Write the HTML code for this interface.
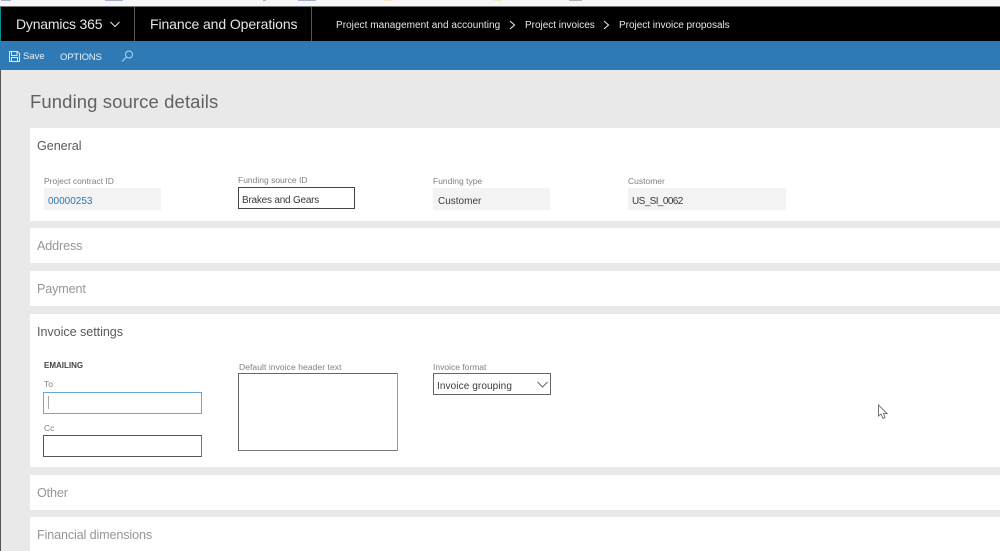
<!DOCTYPE html>
<html><head><meta charset="utf-8">
<style>
html,body{margin:0;padding:0;width:1000px;height:551px;overflow:hidden;background:#e9e9e9;font-family:"Liberation Sans",sans-serif}
.a{position:absolute;white-space:nowrap}
.box{position:absolute;box-sizing:border-box}
.w{position:absolute;left:30px;width:970px;background:#fff}
.h{font-size:12.6px;color:#5a5a5a;line-height:18px;letter-spacing:-.05px}
.hg{font-size:12.6px;color:#969696;line-height:18px;letter-spacing:-.13px}
.l{font-size:8.5px;color:#808080;line-height:11px}
.v{font-size:10px;color:#3a3a3a;line-height:12px}
.ro{background:#f3f3f3}
.in{background:#fff;border:1px solid #555;border-right-color:#777}
.hd{color:#e6e6e6;line-height:16px}
</style></head><body>
<div class="box" style="left:0;top:0;width:1000px;height:6px;background:#f6f6f6"></div>
<div class="box" style="left:1px;top:0;width:10px;height:1px;background:#a5b1ca"></div>
<div class="box" style="left:105px;top:0;width:18px;height:1px;background:#a5b1ca"></div>
<div class="box" style="left:263px;top:0;width:3px;height:1px;background:#a5b1ca"></div>
<div class="box" style="left:298px;top:0;width:18px;height:1px;background:#a5b1ca"></div>
<div class="box" style="left:384px;top:0;width:9px;height:1px;background:#f5e7c6"></div>
<div class="box" style="left:493px;top:0;width:9px;height:1px;background:#f5e7c6"></div>
<div class="box" style="left:569px;top:0;width:13px;height:1px;background:#b5b5b5"></div>
<div class="box" style="left:0;top:6px;width:1000px;height:1px;background:#777"></div>

<div class="box" style="left:0;top:7px;width:1000px;height:34px;background:#000"></div>
<div class="box" style="left:0;top:7px;width:1px;height:34px;background:#0a8f96"></div>
<div class="box" style="left:134px;top:7px;width:1px;height:34px;background:#555"></div>
<div class="box" style="left:311px;top:7px;width:1px;height:34px;background:#555"></div>
<div class="a hd" style="left:16px;top:16px;font-size:14px;letter-spacing:-.2px">Dynamics 365</div>
<svg class="a" style="left:110px;top:21px" width="10" height="7" viewBox="0 0 10 7"><path d="M.5 1L5 5.500 9.500 1" fill="none" stroke="#e6e6e6" stroke-width="1"/></svg>
<div class="a hd" style="left:150px;top:16px;font-size:14px;letter-spacing:-.09px">Finance and Operations</div>
<div class="a hd" style="left:336px;top:18px;font-size:10px;letter-spacing:.04px">Project management and accounting</div>
<svg class="a" style="left:509px;top:20px" width="7" height="10" viewBox="0 0 7 10"><path d="M1 1L5.500 5 1 9" fill="none" stroke="#e6e6e6" stroke-width="1.100"/></svg>
<div class="a hd" style="left:525px;top:18px;font-size:10px;letter-spacing:-.02px">Project invoices</div>
<svg class="a" style="left:603px;top:20px" width="7" height="10" viewBox="0 0 7 10"><path d="M1 1L5.500 5 1 9" fill="none" stroke="#e6e6e6" stroke-width="1.100"/></svg>
<div class="a hd" style="left:619px;top:18px;font-size:10px;letter-spacing:-.02px">Project invoice proposals</div>

<div class="box" style="left:0;top:41px;width:1000px;height:29px;background:#2f7ab5"></div>
<svg class="a" style="left:9px;top:51px" width="11" height="11" viewBox="0 0 11 11"><path d="M.5.500H8.500L10.500 2.500V10.500H.5ZM2.500.500V4.500H8V.500M2.500 10.500V6.500H8.500V10.500" fill="none" stroke="#dbe8f3" stroke-width="1"/></svg>
<div class="a" style="left:23px;top:51px;font-size:9.500px;line-height:12px;color:#e6f0f7">Save</div>
<div class="a" style="left:60px;top:52px;font-size:9.500px;line-height:12px;color:#e6f0f7;letter-spacing:-.15px">OPTIONS</div>
<svg class="a" style="left:121px;top:50px" width="13" height="13" viewBox="0 0 13 13"><circle cx="8" cy="4.500" r="3.500" fill="none" stroke="#b9d3e8" stroke-width="1"/><path d="M5.500 7L1 11.500" stroke="#b9d3e8" stroke-width="1"/></svg>

<div class="box" style="left:0;top:70px;width:1px;height:481px;background:#555"></div>
<div class="a" style="left:30px;top:90px;font-size:18.500px;line-height:24px;color:#626262;letter-spacing:.1px">Funding source details</div>

<div class="w" style="top:128px;height:93px"></div>
<div class="w" style="top:228px;height:35px"></div>
<div class="w" style="top:271px;height:35px"></div>
<div class="w" style="top:314px;height:153px"></div>
<div class="w" style="top:475px;height:35px"></div>
<div class="w" style="top:517px;height:34px"></div>

<div class="a h" style="left:37px;top:137px">General</div>
<div class="a hg" style="left:37px;top:237px">Address</div>
<div class="a hg" style="left:37px;top:280px">Payment</div>
<div class="a h" style="left:37px;top:323px">Invoice settings</div>
<div class="a hg" style="left:37px;top:484px">Other</div>
<div class="a hg" style="left:37px;top:526px">Financial dimensions</div>

<div class="a l" style="left:44px;top:176px">Project contract ID</div>
<div class="box ro" style="left:44px;top:188px;width:117px;height:22px"></div>
<div class="a v" style="left:48px;top:196px;color:#2f77b5">00000253</div>

<div class="a l" style="left:238px;top:175px">Funding source ID</div>
<div class="box in" style="left:238px;top:187px;width:117px;height:22px;border-color:#444"></div>
<div class="a v" style="left:242px;top:195px;letter-spacing:-.22px">Brakes and Gears</div>

<div class="a l" style="left:433px;top:176px">Funding type</div>
<div class="box ro" style="left:433px;top:188px;width:117px;height:22px"></div>
<div class="a v" style="left:438px;top:196px">Customer</div>

<div class="a l" style="left:628px;top:176px">Customer</div>
<div class="box ro" style="left:628px;top:188px;width:158px;height:22px"></div>
<div class="a v" style="left:632px;top:196px;letter-spacing:-.6px">US_SI_0062</div>

<div class="a" style="left:44px;top:360px;font-size:8px;line-height:11px;font-weight:bold;color:#444">EMAILING</div>
<div class="a l" style="left:44px;top:379px">To</div>
<div class="box" style="left:43px;top:392px;width:159px;height:22px;background:#fff;border:1px solid #6ba6d6"></div>
<div class="box" style="left:48px;top:396px;width:1px;height:13px;background:#aaa"></div>
<div class="a l" style="left:44px;top:423px">Cc</div>
<div class="box in" style="left:43px;top:435px;width:159px;height:22px"></div>

<div class="a l" style="left:239px;top:362px;letter-spacing:.07px">Default invoice header text</div>
<div class="box in" style="left:238px;top:373px;width:160px;height:78px;border-color:#666;border-right-color:#999;border-bottom-color:#777"></div>

<div class="a l" style="left:433px;top:362px">Invoice format</div>
<div class="box in" style="left:433px;top:373px;width:118px;height:22px;border-color:#666"></div>
<div class="a v" style="left:437px;top:381px;letter-spacing:.1px">Invoice grouping</div>
<svg class="a" style="left:537px;top:381px" width="11" height="7" viewBox="0 0 11 7"><path d="M.5 1L5.500 6 10.500 1" fill="none" stroke="#666" stroke-width="1"/></svg>

<svg class="a" style="left:877px;top:404px" width="12" height="16" viewBox="0 0 12 16"><path d="M1.500 1V12L4 10 6 14.500 8 13.500 6.500 9.500H10Z" fill="#fff" stroke="#777" stroke-width="1"/></svg>
</body></html>
